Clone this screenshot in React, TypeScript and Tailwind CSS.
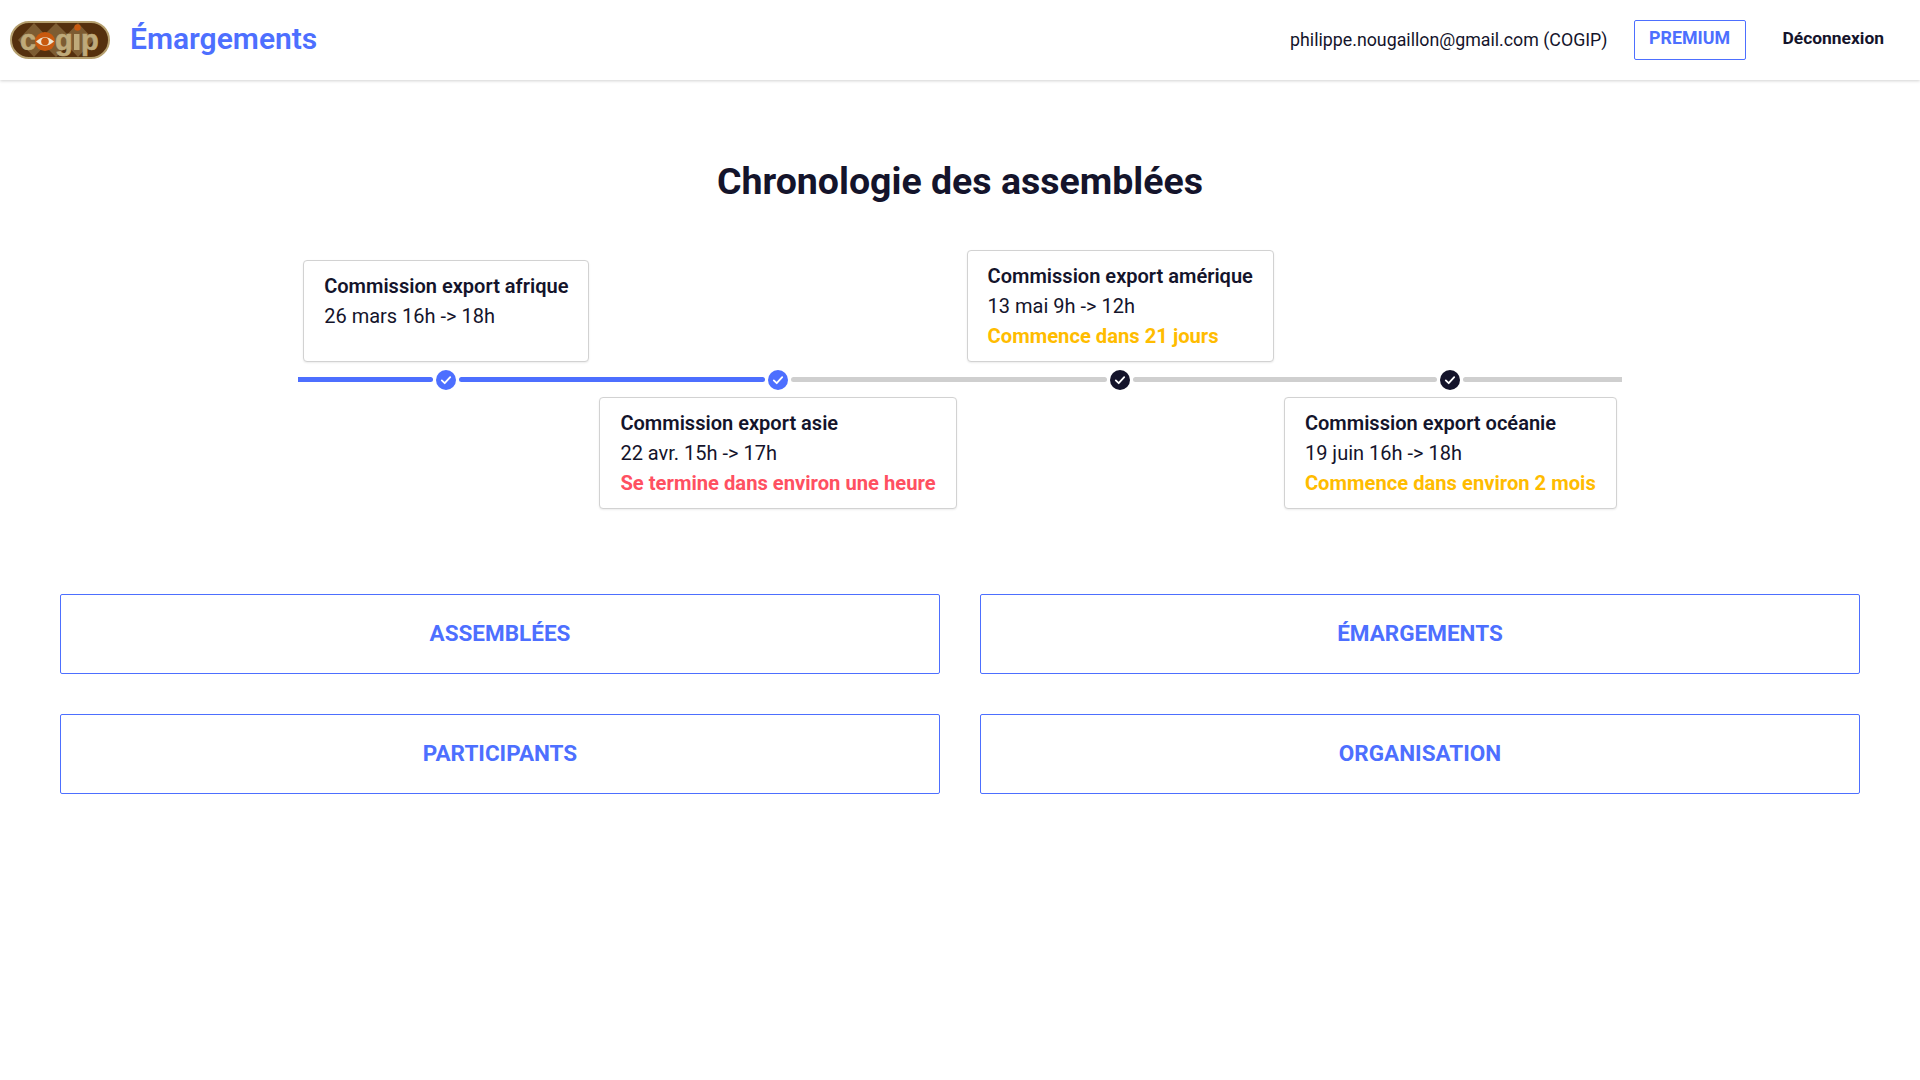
const Logo = () => (
    <svg viewBox="0 0 100 38" className="w-[100px] h-[38px] shrink-0">
        <rect x="1" y="1" width="98" height="36" rx="18" fill="#55300e" stroke="#b59f6e" strokeWidth="2" />
        <path d="M24 2 L40 19 L24 36 L8 19 Z M46 2 L63 19 L46 36 L29 19 Z M68 2 L84 19 L68 36 L52 19 Z" fill="#7d5c32" />
        <g fontFamily="'Liberation Sans', sans-serif" fontWeight="700" fontSize="29" fill="#bfaa7a" stroke="#bfaa7a" strokeWidth="0.6">
            <text x="10" y="29">c</text>
            <text x="45" y="29">g</text>
            <text x="71" y="29">p</text>
        </g>
        <ellipse cx="35" cy="20.5" rx="10" ry="9.5" fill="#c8590f" />
        <path d="M26 20.5 Q35 12 44 20.5 Q35 29 26 20.5 Z" fill="#f0e6d2" />
        <circle cx="35" cy="20.5" r="3.8" fill="#c8590f" />
        <rect x="64" y="13" width="5.5" height="16" fill="#bfaa7a" />
        <circle cx="67.5" cy="6.5" r="3.2" fill="#c8590f" />
    </svg>
)

type Step = {
    title: string
    date: string
    note?: string
    noteClass?: string
    done: boolean
    nextDone: boolean
    top: boolean
}

const steps: Step[] = [
    { title: 'Commission export afrique', date: '26 mars 16h -> 18h', done: true, nextDone: true, top: true },
    { title: 'Commission export asie', date: '22 avr. 15h -> 17h', note: 'Se termine dans environ une heure', noteClass: 'text-[#ff5061]', done: true, nextDone: false, top: false },
    { title: 'Commission export amérique', date: '13 mai 9h -> 12h', note: 'Commence dans 21 jours', noteClass: 'text-[#ffbc00]', done: false, nextDone: false, top: true },
    { title: 'Commission export océanie', date: '19 juin 16h -> 18h', note: 'Commence dans environ 2 mois', noteClass: 'text-[#ffbc00]', done: false, nextDone: false, top: false },
]

const Card = ({ step }: { step: Step }) => (
    <div className="border border-[#d2d2d2] rounded-[4px] bg-white px-5 py-[10px] min-h-[102px] shadow-[0_1px_2px_rgba(0,0,0,0.08)] whitespace-nowrap">
        <p className="text-[20.05px] leading-[30px] font-semibold">{step.title}</p>
        <p className="text-[20px] leading-[30px]">{step.date}</p>
        {step.note && <p className={`text-[20.2px] leading-[30px] font-bold ${step.noteClass}`}>{step.note}</p>}
    </div>
)

const Dot = ({ done }: { done: boolean }) => (
    <svg viewBox="0 0 20 20" className="w-5 h-5 shrink-0">
        <circle cx="10" cy="10" r="10" fill={done ? '#4d6fff' : '#14142b'} />
        <path d="M5.8 10.4 8.7 13.2 14.2 7.2" fill="none" stroke="white" strokeWidth="1.8" strokeLinecap="round" strokeLinejoin="round" />
    </svg>
)

const Column = ({ step }: { step: Step }) => (
    <div className="flex flex-col">
        <div className="h-[112px] px-[5px] flex flex-col justify-end">
            {step.top && <Card step={step} />}
        </div>
        <div className="h-[35px] flex items-center gap-[3px]">
            <div className={`flex-1 h-[5px] rounded-r-full ${step.done ? 'bg-[#4d6fff]' : 'bg-[#cfcfcf]'}`} />
            <Dot done={step.done} />
            <div className={`flex-1 h-[5px] rounded-l-full ${step.nextDone ? 'bg-[#4d6fff]' : 'bg-[#cfcfcf]'}`} />
        </div>
        <div className="h-[112px] px-[5px]">
            {!step.top && <Card step={step} />}
        </div>
    </div>
)

const links = ['Assemblées', 'Émargements', 'Participants', 'Organisation']

export default function App() {
    return (
        <div className="min-h-screen bg-white text-[#14142b] font-['Roboto',sans-serif]">
            <header className="h-20 flex items-center justify-between pl-[10px] pr-[36px] bg-white shadow-[0_1px_3px_rgba(0,0,0,0.18)]">
                <div className="flex items-center gap-5">
                    <Logo />
                    <span className="text-[30px] font-semibold text-[#4d6fff] pb-[3px]">Émargements</span>
                </div>
                <div className="flex items-center">
                    <span className="text-[17.8px]">philippe.nougaillon@gmail.com (COGIP)</span>
                    <button className="ml-[26px] w-[112px] h-10 border border-[#4d6fff] rounded-[2px] text-[#4d6fff] text-[17.8px] font-bold pb-[3px]">PREMIUM</button>
                    <button className="ml-[37px] text-[17.4px] font-bold pb-[3px]">Déconnexion</button>
                </div>
            </header>

            <main className="px-[60px]">
                <h1 className="mt-[76px] text-center text-[37.5px] leading-[50px] font-bold">Chronologie des assemblées</h1>

                <div className="mt-[44px] flex justify-center">
                    {steps.map((step) => (
                        <Column key={step.title} step={step} />
                    ))}
                </div>

                <div className="mt-[85px] grid grid-cols-2 gap-x-10 gap-y-10">
                    {links.map((label) => (
                        <button
                            key={label}
                            className="h-20 border border-[#4d6fff] rounded-[2px] text-[#4d6fff] text-[22.5px] font-bold uppercase">
                            {label}
                        </button>
                    ))}
                </div>
            </main>
        </div>
    )
}
